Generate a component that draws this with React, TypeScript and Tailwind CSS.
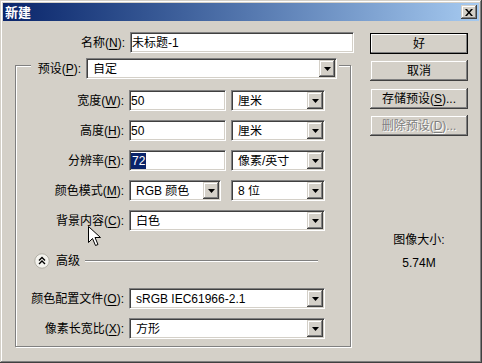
import type { ReactNode } from 'react';

// Win classic "新建" dialog

const raised =
  'shadow-[inset_-1px_-1px_0_#404040,inset_1px_1px_0_#d4d0c8,inset_-2px_-2px_0_#808080,inset_2px_2px_0_#ffffff]';
const sunken =
  'border border-t-[#808080] border-l-[#808080] border-b-white border-r-white shadow-[inset_1px_1px_0_#404040,inset_-1px_-1px_0_#d4d0c8]';

function U({ children }: { children: ReactNode }) {
  return <span className="underline underline-offset-2">{children}</span>;
}

function Label({ className, children }: { className: string; children: ReactNode }) {
  return <div className={`shrink-0 text-right whitespace-nowrap ${className}`}>{children}</div>;
}

function Edit({ className, children }: { className: string; children: ReactNode }) {
  return (
    <div className={`h-[21px] bg-white flex items-center pl-[1px] ${sunken} ${className}`}>{children}</div>
  );
}

function Combo({ className, children }: { className: string; children: ReactNode }) {
  return (
    <div className={`h-[21px] bg-white flex items-center ${sunken} ${className}`}>
      <div className="flex-1 pl-[6px] whitespace-nowrap overflow-hidden">{children}</div>
      <div className={`w-[16px] h-[17px] mr-px bg-[#d4d0c8] flex items-center justify-center ${raised}`}>
        <svg width="7" height="4" viewBox="0 0 7 4">
          <path d="M0 0h7L3.5 4z" fill="#000" />
        </svg>
      </div>
    </div>
  );
}

function Btn({ children, primary, disabled }: { children: ReactNode; primary?: boolean; disabled?: boolean }) {
  return (
    <div
      className={`w-[98px] h-[21px] flex items-center justify-center bg-[#d4d0c8] ${raised} ${
        primary ? 'outline outline-1 outline-black -outline-offset-1' : ''
      } ${disabled ? 'text-[#808080] [text-shadow:1px_1px_0_#fff]' : 'text-black'}`}
    >
      {children}
    </div>
  );
}

export default function App() {
  return (
    <div
      className={`relative w-[482px] h-[363px] bg-[#d4d0c8] text-[12px] leading-none text-black shadow-[inset_-1px_-1px_0_#404040,inset_1px_1px_0_#d4d0c8,inset_-2px_-2px_0_#808080,inset_2px_2px_0_#ffffff] overflow-hidden`}
      style={{ fontFamily: '"Liberation Sans", "Noto Sans CJK SC", sans-serif' }}
    >
      {/* title bar */}
      <div className="mx-[3px] mt-[3px] h-[18px] bg-linear-to-r from-[#0a246a] to-[#a6caf0] flex items-center justify-between pl-[2px] pr-[2px]">
        <span className="text-white font-bold text-[13px]">新建</span>
        <div className={`w-[16px] h-[14px] bg-[#d4d0c8] flex items-center justify-center ${raised}`}>
          <svg width="8" height="7" viewBox="0 0 8 7">
            <path d="M0 0h2l2 2.5L6 0h2L5 3.5 8 7H6L4 4.5 2 7H0l3-3.5z" fill="#000" />
          </svg>
        </div>
      </div>

      <div className="flex">
        {/* left column */}
        <div className="w-[360px] shrink-0">
          <div className="flex items-center mt-[11px]">
            <Label className="w-[125px]">
              名称(<U>N</U>):
            </Label>
            <Edit className="ml-[5px] w-[224px]">未标题-1</Edit>
          </div>

          {/* group box */}
          <div className="ml-[15px] mt-[12px] w-[336px] h-[282px] border border-[#808080] shadow-[inset_1px_1px_0_#fff,1px_1px_0_#fff]">
            <div className="-mt-[8px] ml-[15px] w-[308px] bg-[#d4d0c8] flex items-center">
              <Label className="w-[50px]">
                预设(<U>P</U>):
              </Label>
              <Combo className="ml-[5px] w-[251px]">自定</Combo>
            </div>

            <div className="flex items-center mt-[11px]">
              <Label className="w-[108px]">
                宽度(<U>W</U>):
              </Label>
              <Edit className="ml-[5px] w-[97px]">50</Edit>
              <Combo className="ml-[5px] w-[94px]">厘米</Combo>
            </div>
            <div className="flex items-center mt-[9px]">
              <Label className="w-[108px]">
                高度(<U>H</U>):
              </Label>
              <Edit className="ml-[5px] w-[97px]">50</Edit>
              <Combo className="ml-[5px] w-[94px]">厘米</Combo>
            </div>
            <div className="flex items-center mt-[9px]">
              <Label className="w-[108px]">
                分辨率(<U>R</U>):
              </Label>
              <Edit className="ml-[5px] w-[97px]">
                <span className="bg-[#0a246a] text-white px-px py-[2px]">72</span>
              </Edit>
              <Combo className="ml-[5px] w-[94px]">像素/英寸</Combo>
            </div>
            <div className="flex items-center mt-[9px]">
              <Label className="w-[108px]">
                颜色模式(<U>M</U>):
              </Label>
              <Combo className="ml-[5px] w-[92px]">RGB 颜色</Combo>
              <Combo className="ml-[10px] w-[94px]">8 位</Combo>
            </div>
            <div className="flex items-center mt-[9px]">
              <Label className="w-[108px]">
                背景内容(<U>C</U>):
              </Label>
              <Combo className="ml-[5px] w-[196px]">白色</Combo>
            </div>

            {/* advanced */}
            <div className="flex items-center mt-[22px] h-[15px] ml-[18px]">
              <svg width="16" height="16" viewBox="0 0 16 16" className="shrink-0">
                <circle cx="8" cy="8" r="7.2" fill="#f4f3ee" stroke="#a7a49b" strokeWidth="0.8" />
                <path d="M5 7.5l3-3 3 3M5 11l3-3 3 3" fill="none" stroke="#000" strokeWidth="1.4" />
              </svg>
              <span className="ml-[6px]">高级</span>
              <div className="ml-[5px] w-[233px] h-px bg-[#808080] shadow-[0_1px_0_#fff]" />
            </div>

            <div className="flex items-center mt-[20px]">
              <Label className="w-[108px]">
                颜色配置文件(<U>O</U>):
              </Label>
              <Combo className="ml-[5px] w-[196px]">sRGB IEC61966-2.1</Combo>
            </div>
            <div className="flex items-center mt-[9px]">
              <Label className="w-[108px]">
                像素长宽比(<U>X</U>):
              </Label>
              <Combo className="ml-[5px] w-[196px]">方形</Combo>
            </div>
          </div>
        </div>

        {/* right column */}
        <div className="ml-[10px] flex flex-col">
          <div className="mt-[12px]">
            <Btn primary>好</Btn>
          </div>
          <div className="mt-[6px]">
            <Btn>取消</Btn>
          </div>
          <div className="mt-[7px]">
            <Btn>
              存储预设(<U>S</U>)...
            </Btn>
          </div>
          <div className="mt-[6px]">
            <Btn disabled>
              删除预设(<U>D</U>)...
            </Btn>
          </div>
          <div className="mt-[98px] w-[98px] flex flex-col items-center">
            <span>图像大小:</span>
            <span className="mt-[11px]">5.74M</span>
          </div>
        </div>
      </div>

      {/* mouse cursor */}
      <svg className="absolute left-[88px] top-[226px]" width="13" height="21" viewBox="0 0 13 21">
        <path d="M0.5 0.5v16l4-4 3 7 2.5-1-3-7h5.5z" fill="#fff" stroke="#000" strokeWidth="1" />
      </svg>
    </div>
  );
}
